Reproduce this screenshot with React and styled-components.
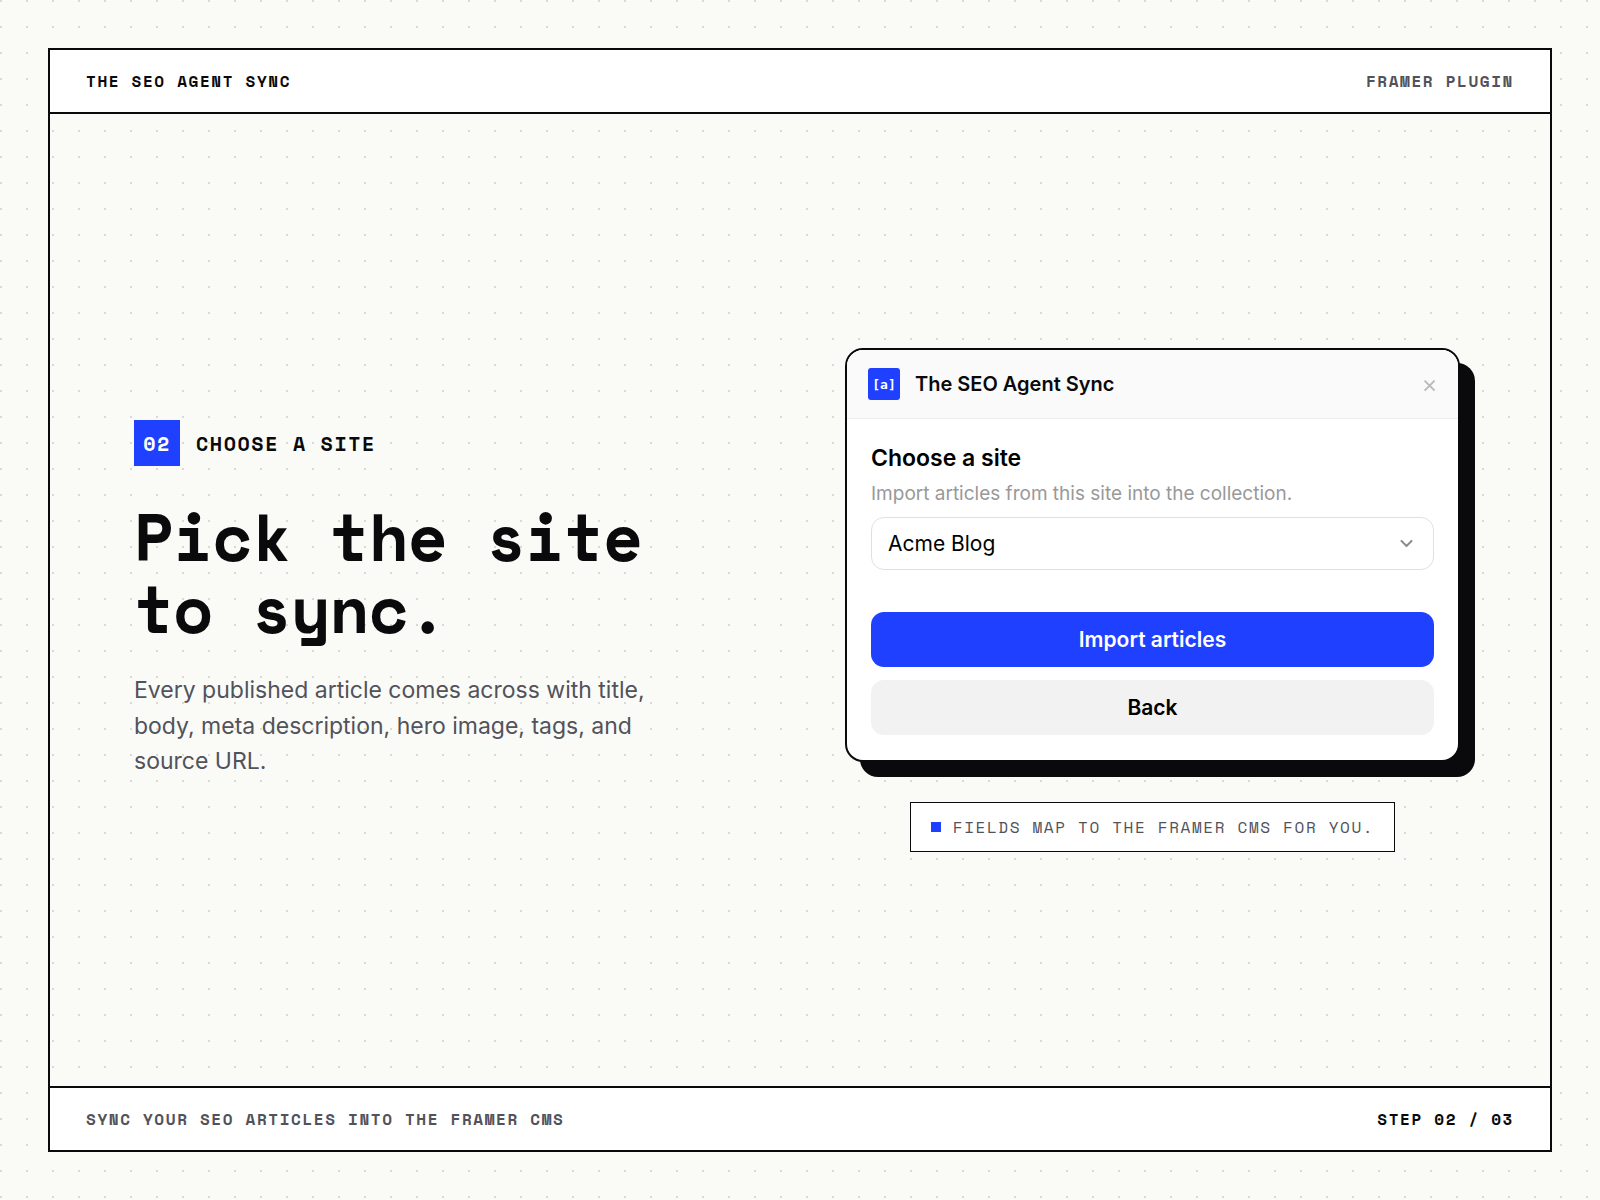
import React, { useState } from "react";
import styled, { createGlobalStyle } from "styled-components";

const INK = "#0a0a0c";
const MUTED = "#52525b";
const BLUE = "#1f40ff";
const SANS = `Inter, "Liberation Sans", sans-serif`;
const MONO = `"Space Mono", "DejaVu Sans Mono", "Liberation Mono", monospace`;

const GlobalStyle = createGlobalStyle`
    *, *::before, *::after {
        box-sizing: border-box;
    }

    body {
        margin: 0;
        color: ${INK};
        font-family: ${SANS};
        background-color: #fafbf7;
        background-image: radial-gradient(circle at 1px 1px, #d9d9d6 1px, transparent 1px);
        background-size: 26px 26px;
    }
`;

const Page = styled.div`
    display: flex;
    min-height: 100vh;
    padding: 48px;
`;

const Frame = styled.div`
    display: flex;
    flex-direction: column;
    flex: 1;
    min-width: 0;
    border: 2px solid ${INK};
`;

const Bar = styled.div`
    display: flex;
    align-items: center;
    justify-content: space-between;
    min-height: 64px;
    padding: 0 36px;
    background: #ffffff;
    font-family: ${MONO};
    font-size: 16px;
    font-weight: 700;
    letter-spacing: 0.1em;
    text-transform: uppercase;
`;

const TopBar = styled(Bar)`
    border-bottom: 2px solid ${INK};
`;

const BottomBar = styled(Bar)`
    border-top: 2px solid ${INK};
`;

const BarText = styled.span`
    color: ${({ $muted }) => ($muted ? MUTED : INK)};
`;

const Main = styled.main`
    display: grid;
    grid-template-columns: 1fr 1fr;
    gap: 78px;
    align-items: center;
    flex: 1;
    padding: 48px 84px;
`;

const Eyebrow = styled.div`
    display: flex;
    align-items: center;
    gap: 16px;
    font-family: ${MONO};
    font-size: 20px;
    font-weight: 700;
    letter-spacing: 0.08em;
    text-transform: uppercase;
`;

const StepBadge = styled.span`
    display: flex;
    align-items: center;
    justify-content: center;
    width: 46px;
    height: 46px;
    background: ${BLUE};
    color: #ffffff;
`;

const Headline = styled.h1`
    margin: 34px 0 29px;
    font-family: ${MONO};
    font-size: 66px;
    font-weight: 700;
    line-height: 72px;
    letter-spacing: -0.02em;
`;

const Lead = styled.p`
    max-width: 540px;
    margin: 0;
    color: ${MUTED};
    font-size: 23px;
    line-height: 1.55;
`;

const Preview = styled.div`
    display: flex;
    flex-direction: column;
    align-items: center;
    gap: 40px;
`;

const Card = styled.section`
    width: 100%;
    max-width: 615px;
    overflow: hidden;
    border: 2px solid ${INK};
    border-radius: 18px;
    background: #ffffff;
    box-shadow: 15px 15px 0 ${INK};
`;

const CardHeader = styled.header`
    display: flex;
    align-items: center;
    gap: 15px;
    height: 69px;
    padding: 0 21px;
    border-bottom: 1px solid #ececec;
    background: #fafafa;
`;

const Logo = styled.span`
    display: flex;
    align-items: center;
    justify-content: center;
    width: 32px;
    height: 32px;
    border-radius: 3px;
    background: ${BLUE};
    color: #ffffff;
    font-family: "DejaVu Sans Mono", monospace;
    font-size: 13px;
    font-weight: 700;
`;

const CardTitle = styled.h2`
    flex: 1;
    margin: 0;
    font-size: 20px;
    font-weight: 600;
`;

const CloseButton = styled.button`
    display: flex;
    padding: 0;
    border: 0;
    background: none;
    color: #bbbbbb;
    cursor: pointer;
`;

const CardBody = styled.div`
    display: flex;
    flex-direction: column;
    padding: 25px 24px;
    color: #000000;
`;

const FieldLabel = styled.label`
    font-size: 23px;
    font-weight: 600;
    line-height: 28px;
`;

const FieldHint = styled.p`
    margin: 9px 0 10px;
    color: #999999;
    font-size: 19px;
    line-height: 26px;
`;

const SelectWrap = styled.div`
    position: relative;
    margin-bottom: 42px;

    svg {
        position: absolute;
        top: 23px;
        right: 20px;
        pointer-events: none;
    }
`;

const Select = styled.select`
    display: block;
    width: 100%;
    height: 53px;
    padding: 0 44px 0 16px;
    border: 1px solid #e0e0e0;
    border-radius: 13px;
    appearance: none;
    background: #ffffff;
    color: #000000;
    font-family: inherit;
    font-size: 21px;
`;

const Actions = styled.div`
    display: flex;
    flex-direction: column;
    gap: 13px;
`;

const Button = styled.button`
    height: 55px;
    border: 0;
    border-radius: 13px;
    background: ${({ $primary }) => ($primary ? BLUE : "#f2f2f2")};
    color: ${({ $primary }) => ($primary ? "#ffffff" : "#000000")};
    font-family: inherit;
    font-size: 21px;
    font-weight: 600;
    cursor: pointer;
`;

const Note = styled.div`
    display: flex;
    align-items: center;
    gap: 12px;
    min-height: 50px;
    padding: 0 20px;
    border: 1px solid ${INK};
    background: #ffffff;
    color: ${MUTED};
    font-family: ${MONO};
    font-size: 16px;
    letter-spacing: 0.1em;
    text-transform: uppercase;

    &::before {
        content: "";
        width: 10px;
        height: 10px;
        background: ${BLUE};
    }
`;

const CloseIcon = () => (
    <svg width="16" height="16" viewBox="0 0 16 16" fill="none" aria-hidden="true">
        <path d="M3.6 4.6l10 10M13.6 4.6l-10 10" stroke="currentColor" strokeWidth="2" />
    </svg>
);

const ChevronIcon = () => (
    <svg width="14" height="8" viewBox="0 0 14 8" fill="none" aria-hidden="true">
        <path
            d="M1.5 1l5 5 5-5"
            stroke="#8c8c8c"
            strokeWidth="2"
            strokeLinecap="round"
            strokeLinejoin="round"
        />
    </svg>
);

const sites = ["Acme Blog"];

const PluginCard = () => {
    const [site, setSite] = useState(sites[0]);

    return (
        <Card>
            <CardHeader>
                <Logo>[a]</Logo>
                <CardTitle>The SEO Agent Sync</CardTitle>
                <CloseButton type="button" aria-label="Close">
                    <CloseIcon />
                </CloseButton>
            </CardHeader>
            <CardBody>
                <FieldLabel htmlFor="site">Choose a site</FieldLabel>
                <FieldHint>
                    Import articles from this site into the collection.
                </FieldHint>
                <SelectWrap>
                    <Select
                        id="site"
                        value={site}
                        onChange={(e) => setSite(e.target.value)}
                    >
                        {sites.map((name) => (
                            <option key={name}>{name}</option>
                        ))}
                    </Select>
                    <ChevronIcon />
                </SelectWrap>
                <Actions>
                    <Button type="button" $primary>
                        Import articles
                    </Button>
                    <Button type="button">Back</Button>
                </Actions>
            </CardBody>
        </Card>
    );
};

export default function App() {
    return (
        <>
            <GlobalStyle />
            <Page>
                <Frame>
                    <TopBar as="header">
                        <BarText>The SEO Agent Sync</BarText>
                        <BarText $muted>Framer Plugin</BarText>
                    </TopBar>
                    <Main>
                        <div>
                            <Eyebrow>
                                <StepBadge>02</StepBadge>
                                <span>Choose a site</span>
                            </Eyebrow>
                            <Headline>
                                Pick the site
                                <br />
                                to sync.
                            </Headline>
                            <Lead>
                                Every published article comes across with title,
                                body, meta description, hero image, tags, and
                                source URL.
                            </Lead>
                        </div>
                        <Preview>
                            <PluginCard />
                            <Note>Fields map to the Framer CMS for you.</Note>
                        </Preview>
                    </Main>
                    <BottomBar as="footer">
                        <BarText $muted>
                            Sync your SEO articles into the Framer CMS
                        </BarText>
                        <BarText>Step 02 / 03</BarText>
                    </BottomBar>
                </Frame>
            </Page>
        </>
    );
}
